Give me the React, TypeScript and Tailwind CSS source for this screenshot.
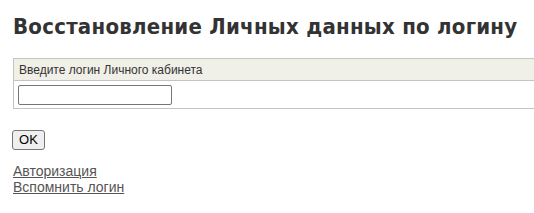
import React from 'react';

export default function App() {
  return (
    <div className="min-h-[213px] bg-white pl-[13px] overflow-hidden font-['Liberation_Sans',Arial,sans-serif]">
      {/* Heading */}
      <h1 className="pt-[14px] text-[22px] leading-[26px] tracking-[0.25px] font-bold text-[#333333] font-['DejaVu_Sans_Condensed','DejaVu_Sans',Tahoma,sans-serif] whitespace-nowrap">
        Восстановление Личных данных по логину
      </h1>

      {/* Login form box */}
      <div className="mt-[18px] w-[600px] border border-[#c4c4c0]">
        <div className="h-[22px] bg-[#f0efe8] border-b border-[#c4c4c0] pl-[5px] text-[12px] leading-[22px] text-[#333333]">
          Введите логин Личного кабинета
        </div>
        <div className="h-[27px] pl-[4px] pt-[4px]">
          <input
            type="text"
            className="block w-[154px] h-[20px] border border-[#767676] rounded-[2px] bg-white px-1 text-[13px] outline-none"
          />
        </div>
      </div>

      {/* Submit */}
      <button className="mt-[21px] block h-[20px] w-[33px] -ml-[1px] border border-[#767676] rounded-[3px] bg-[#efefef] text-[13px] leading-[18px] text-black">
        OK
      </button>

      {/* Links */}
      <div className="mt-[13px] text-[14px] leading-[16px] text-[#555555]">
        <a href="#" className="block w-fit underline">Авторизация</a>
        <a href="#" className="block w-fit underline">Вспомнить логин</a>
      </div>
    </div>
  );
}
